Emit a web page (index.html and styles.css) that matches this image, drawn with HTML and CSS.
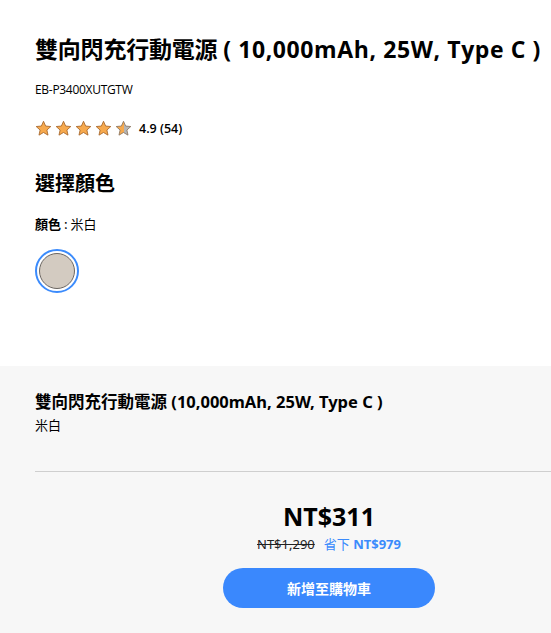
FILE: index.html
```html
<!DOCTYPE html>
<html lang="zh-Hant">
<head>
<meta charset="utf-8">
<link rel="stylesheet" href="styles.css">
</head>
<body>
<div class="page">
  <section class="top">
    <h1 class="title">雙向閃充行動電源 <span class="latin">( 10,000mAh, 25W, Type C )</span></h1>
    <div class="sku">EB-P3400XUTGTW</div>
    <div class="rating">
      <span class="stars">
        <svg class="star" viewBox="0 0 20 20"><path d="M10 1.5l2.5 5.6 6.1.6-4.6 4.1 1.3 6L10 14.7l-5.3 3.1 1.3-6L1.4 7.7l6.1-.6z" fill="#f6a94e" stroke="#a5662a" stroke-width="1"/></svg>
        <svg class="star" viewBox="0 0 20 20"><path d="M10 1.5l2.5 5.6 6.1.6-4.6 4.1 1.3 6L10 14.7l-5.3 3.1 1.3-6L1.4 7.7l6.1-.6z" fill="#f6a94e" stroke="#a5662a" stroke-width="1"/></svg>
        <svg class="star" viewBox="0 0 20 20"><path d="M10 1.5l2.5 5.6 6.1.6-4.6 4.1 1.3 6L10 14.7l-5.3 3.1 1.3-6L1.4 7.7l6.1-.6z" fill="#f6a94e" stroke="#a5662a" stroke-width="1"/></svg>
        <svg class="star" viewBox="0 0 20 20"><path d="M10 1.5l2.5 5.6 6.1.6-4.6 4.1 1.3 6L10 14.7l-5.3 3.1 1.3-6L1.4 7.7l6.1-.6z" fill="#f6a94e" stroke="#a5662a" stroke-width="1"/></svg>
        <svg class="star" viewBox="0 0 20 20"><defs><linearGradient id="half"><stop offset="50%" stop-color="#f6a94e"/><stop offset="50%" stop-color="#b5b5b5"/></linearGradient></defs><path d="M10 1.5l2.5 5.6 6.1.6-4.6 4.1 1.3 6L10 14.7l-5.3 3.1 1.3-6L1.4 7.7l6.1-.6z" fill="url(#half)" stroke="#8a7560" stroke-width="1"/></svg>
      </span>
      <span class="score">4.9 (54)</span>
    </div>
    <h2 class="subhead">選擇顏色</h2>
    <div class="color-label"><b>顏色</b> : 米白</div>
    <div class="swatches">
      <span class="swatch selected"><span class="swatch-inner"></span></span>
    </div>
  </section>
  <section class="summary">
    <div class="sum-name">雙向閃充行動電源 (10,000mAh, 25W, Type C )</div>
    <div class="sum-color">米白</div>
    <hr class="divider">
    <div class="price-block">
      <div class="price">NT$311</div>
      <div class="price-sub"><s class="orig">NT$1,290</s><span class="save">省下 <b>NT$979</b></span></div>
      <button class="cart">新增至購物車</button>
    </div>
  </section>
</div>
</body>
</html>
```

FILE: styles.css
```css
html, body {
  margin: 0;
  padding: 0;
  background: #fff;
  overflow: hidden;
}
body {
  font-family: "Open Sans", "Noto Sans CJK TC", sans-serif;
  color: #000;
  width: 551px;
  height: 633px;
}
.page {
  display: flex;
  flex-direction: column;
  height: 633px;
}
.top {
  padding: 31px 0 0 35px;
  height: 335px;
  box-sizing: border-box;
}
.title {
  margin: 0;
  font-family: "Open Sans", "Noto Sans CJK TC", sans-serif;
  font-weight: 700;
  font-size: 23px;
  line-height: 36px;
  white-space: nowrap;
  letter-spacing: -0.2px;
}
.title .latin {
  letter-spacing: 0.6px;
}
.sku {
  margin-top: 14px;
  font-size: 12px;
  line-height: 18px;
  letter-spacing: -0.3px;
}
.rating {
  margin-top: 19px;
  display: flex;
  align-items: center;
  gap: 6px;
  height: 20px;
}
.stars {
  display: flex;
  gap: 3px;
}
.star {
  width: 17px;
  height: 17px;
  display: block;
}
.score {
  font-size: 12.5px;
  font-weight: 600;
  margin-left: 1px;
}
.subhead {
  margin: 31px 0 0;
  font-family: "Noto Sans CJK TC", sans-serif;
  font-size: 20px;
  font-weight: 700;
  line-height: 28px;
}
.color-label {
  margin-top: 18px;
  font-family: "Noto Sans CJK TC", sans-serif;
  font-size: 13px;
  line-height: 18px;
}
.color-label b {
  font-weight: 700;
}
.swatches {
  margin-top: 16px;
  display: flex;
}
.swatch {
  width: 44px;
  height: 44px;
  box-sizing: border-box;
  border-radius: 50%;
  border: 2px solid #3b8bfc;
  display: flex;
  align-items: center;
  justify-content: center;
}
.swatch-inner {
  width: 36px;
  height: 36px;
  box-sizing: border-box;
  border-radius: 50%;
  background: #d3cbc1;
  border: 1px solid #6b6661;
}
.summary {
  flex: 1;
  background: #f7f7f7;
  margin-top: 31px;
  padding: 24px 0 0 35px;
}
.sum-name {
  font-family: "Noto Sans", "Noto Sans CJK TC", sans-serif;
  font-size: 16.5px;
  font-weight: 700;
  line-height: 24px;
  white-space: nowrap;
}
.sum-color {
  margin-top: 2px;
  font-family: "Noto Sans CJK TC", sans-serif;
  font-size: 13px;
  line-height: 18px;
}
.divider {
  margin: 37px 0 0;
  border: 0;
  border-top: 1px solid #cfcfcf;
}
.price-block {
  display: flex;
  flex-direction: column;
  align-items: center;
  padding: 28px 0 0 72px;
}
.price {
  font-family: "Noto Sans", sans-serif;
  font-size: 25px;
  font-weight: 700;
  line-height: 32px;
}
.price-sub {
  display: flex;
  gap: 9px;
  font-family: "Noto Sans", "Noto Sans CJK TC", sans-serif;
  font-size: 13px;
  line-height: 18px;
  margin-top: 3px;
}
.orig {
  color: #222;
}
.save {
  color: #3b8bfc;
}
.save b {
  font-weight: 700;
}
.cart {
  margin-top: 15px;
  width: 212px;
  height: 40px;
  border: 0;
  border-radius: 20px;
  background: #3a88fd;
  color: #fff;
  font-family: "Noto Sans CJK TC", sans-serif;
  font-size: 14px;
  font-weight: 700;
}
```
